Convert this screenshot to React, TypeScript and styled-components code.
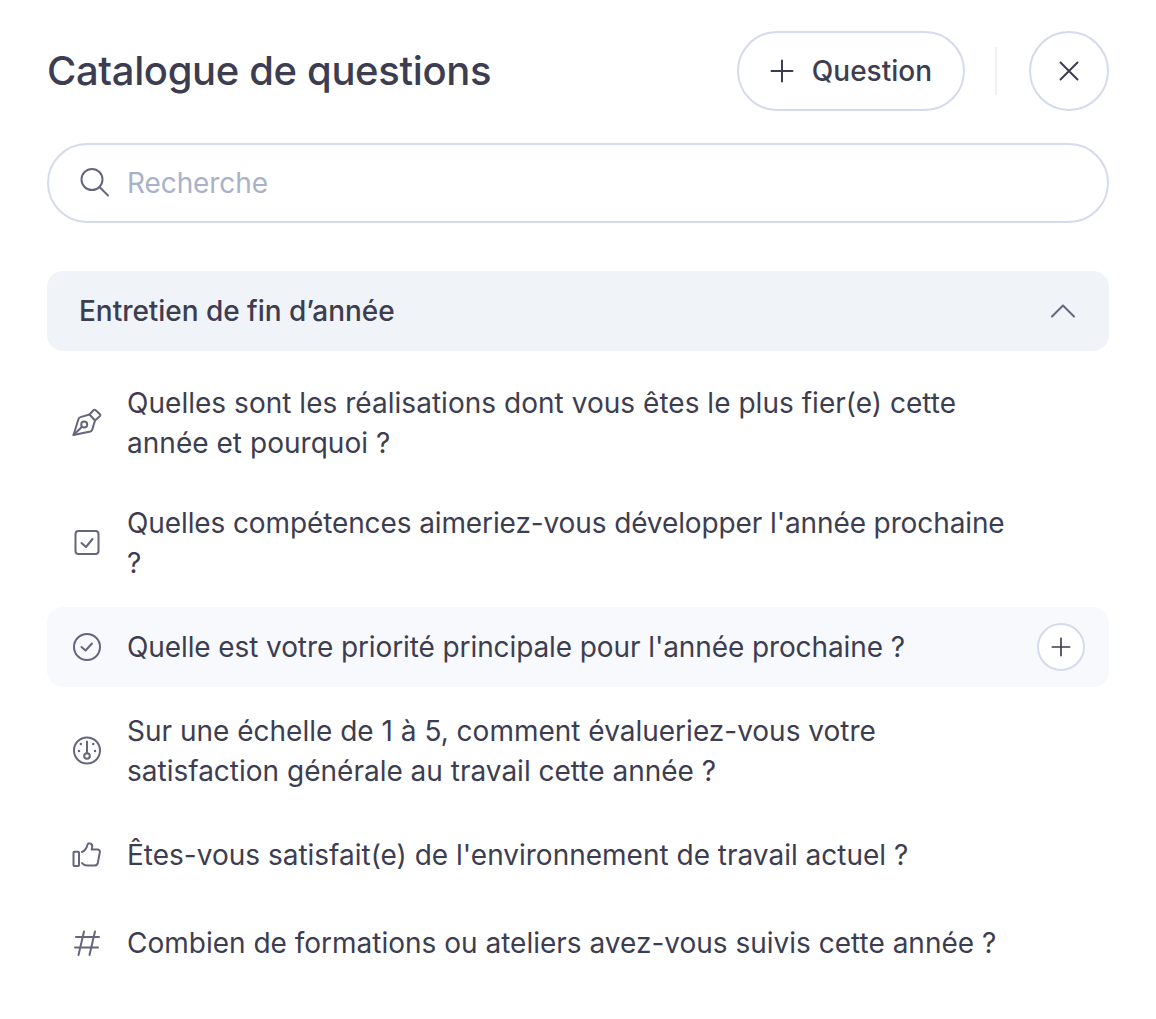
import React from 'react';
import styled, { createGlobalStyle } from 'styled-components';

const INK = '#3d3d51';
const ICON = '#65657f';
const LINE = '#d5daec';

const GlobalStyle = createGlobalStyle`
    html, body {
        margin: 0;
        padding: 0;
        background: #ffffff;
    }
    * {
        box-sizing: border-box;
    }
`;

const Panel = styled.div`
    display: flex;
    flex-direction: column;
    width: 1156px;
    height: 1019px;
    padding: 31px 47px 0;
    font-family: Inter, 'Liberation Sans', sans-serif;
    color: ${INK};
`;

const Header = styled.header`
    display: flex;
    align-items: center;
    height: 80px;
`;

const Title = styled.h1`
    flex: 1;
    margin: 0;
    font-size: 40px;
    line-height: 48px;
    font-weight: 500;
    letter-spacing: -0.36px;
    color: ${INK};
`;

const PillButton = styled.button`
    display: flex;
    align-items: center;
    gap: 18px;
    height: 80px;
    padding: 0 31px 0 31px;
    border: 2px solid ${LINE};
    border-radius: 40px;
    background: #ffffff;
    font-family: inherit;
    font-size: 28px;
    font-weight: 500;
    color: ${INK};
`;

const Divider = styled.div`
    width: 2px;
    height: 48px;
    margin: 0 32px 0 30px;
    background: #f0f1f5;
`;

const RoundButton = styled.button<{ $size: number; $hidden?: boolean }>`
    display: flex;
    align-items: center;
    justify-content: center;
    flex: none;
    width: ${(props) => props.$size}px;
    height: ${(props) => props.$size}px;
    padding: 0;
    border: 2px solid ${LINE};
    border-radius: 50%;
    background: #ffffff;
    visibility: ${(props) => (props.$hidden ? 'hidden' : 'visible')};
`;

const Search = styled.div`
    display: flex;
    align-items: center;
    gap: 16px;
    height: 80px;
    margin-top: 32px;
    padding: 0 30px;
    border: 2px solid ${LINE};
    border-radius: 40px;
    font-size: 28px;
    line-height: 40px;
    letter-spacing: -0.1px;
    color: #a9b2c9;
`;

const SectionHeader = styled.div`
    display: flex;
    align-items: center;
    justify-content: space-between;
    height: 80px;
    margin-top: 48px;
    padding: 0 30px 0 32px;
    border-radius: 16px;
    background: #f0f3f8;
    font-size: 28px;
    font-weight: 500;
    letter-spacing: -0.04px;
    color: ${INK};
`;

const List = styled.div`
    display: flex;
    flex-direction: column;
    gap: 8px;
    margin-top: 16px;
`;

const Row = styled.div<{ $active?: boolean }>`
    display: flex;
    align-items: center;
    gap: 24px;
    min-height: 80px;
    padding: 16px 24px;
    border-radius: 16px;
    background: ${(props) => (props.$active ? '#f8f9fc' : 'transparent')};
`;

const RowText = styled.div<{ $tracking?: number }>`
    flex: 1;
    font-size: 28px;
    line-height: 40px;
    letter-spacing: ${(props) => props.$tracking || 0}px;
    color: ${INK};
`;

const Glyph = styled.svg.attrs({ fill: 'none', strokeLinecap: 'round', strokeLinejoin: 'round' })<{ $size?: number; $dark?: boolean }>`
    display: block;
    flex: none;
    width: ${(props) => props.$size || 32}px;
    height: ${(props) => props.$size || 32}px;
    stroke: ${(props) => (props.$dark ? INK : ICON)};
    stroke-width: 2;
`;

const PenIcon = () => (
    <Glyph viewBox="0 0 32 32">
        <path d="M2.500 28 7.500 12c.3-1 1-1.600 2-1.900L18.500 7.500l5.500 6-2.700 9c-.3 1-.9 1.700-1.900 2L2.500 28Z" />
        <path d="M18.500 7.500l4.200-4.500c.5-.5 1.200-.5 1.700 0l4.600 4.300c.5.5.5 1.200 0 1.700L24 13.500" />
        <circle cx="13.200" cy="17.600" r="3" />
        <path d="M2.500 28l8.500-8.300" />
    </Glyph>
);

const CheckSquareIcon = () => (
    <Glyph viewBox="0 0 32 32">
        <rect x="4.500" y="4" width="23" height="23" rx="3" />
        <path d="M10.500 16l4.500 4 6.500-8" />
    </Glyph>
);

const CheckCircleIcon = () => (
    <Glyph viewBox="0 0 32 32">
        <circle cx="16" cy="16" r="13" />
        <path d="M10.500 16l4 3.500 6.500-7" />
    </Glyph>
);

const GaugeIcon = () => (
    <Glyph viewBox="0 0 32 32">
        <circle cx="16" cy="15.500" r="13" />
        <circle cx="16" cy="21" r="2.800" />
        <path d="M16 18.200V6.500" />
        <path strokeWidth="2.500" d="M8 16h.01M9.800 9h.01M22.200 9h.01M24 16h.01" />
    </Glyph>
);

const ThumbIcon = () => (
    <Glyph viewBox="0 0 32 32">
        <rect x="2.500" y="12.700" width="5.500" height="14.300" rx="0.800" />
        <path d="M11 13c2.600-1.200 4.600-3.600 5.400-7 .3-1.200 1-1.900 2.200-1.700 1.600.2 2.600 1.500 2.600 3.100 0 1-.2 2-.6 3h6c1.600 0 2.600 1.400 2.200 3l-2 10.500c-.4 1.700-1.500 2.600-3.200 2.600h-7.600c-2.200 0-3.600-.8-5-2.400" />
    </Glyph>
);

const HashIcon = () => (
    <Glyph viewBox="0 0 32 32">
        <path d="M5 10h23M4 20.500h23M13 4.500 7.500 28M24 4.500 18.500 28" />
    </Glyph>
);

const SearchIcon = () => (
    <Glyph viewBox="0 0 32 32">
        <circle cx="13" cy="12.500" r="10.500" />
        <path d="M20.500 20 29 28.500" />
    </Glyph>
);

const PlusIcon = ({ size }: { size: number }) => (
    <Glyph viewBox="0 0 24 24" $size={size} $dark>
        <path d="M12 1.500v21M1.500 12h21" />
    </Glyph>
);

const CloseIcon = () => (
    <Glyph viewBox="0 0 20 20" $size={20} $dark>
        <path d="M1.500 1.500l17 17M18.500 1.500l-17 17" />
    </Glyph>
);

const CaretIcon = () => (
    <Glyph viewBox="0 0 32 32">
        <path d="M5 21.500 16 10.500l11 11" />
    </Glyph>
);

const questions = [
    { icon: <PenIcon />, tracking: 0.03, text: 'Quelles sont les réalisations dont vous êtes le plus fier(e) cette année et pourquoi ?' },
    { icon: <CheckSquareIcon />, tracking: -0.11, text: "Quelles compétences aimeriez-vous développer l'année prochaine ?" },
    { icon: <CheckCircleIcon />, tracking: -0.1, text: "Quelle est votre priorité principale pour l'année prochaine ?", active: true },
    { icon: <GaugeIcon />, text: 'Sur une échelle de 1 à 5, comment évalueriez-vous votre satisfaction générale au travail cette année ?' },
    { icon: <ThumbIcon />, text: "Êtes-vous satisfait(e) de l'environnement de travail actuel ?" },
    { icon: <HashIcon />, text: 'Combien de formations ou ateliers avez-vous suivis cette année ?' },
];

export default function App() {
    return (
        <Panel>
            <GlobalStyle />
            <Header>
                <Title>Catalogue de questions</Title>
                <PillButton>
                    <PlusIcon size={24} />
                    Question
                </PillButton>
                <Divider />
                <RoundButton $size={80}>
                    <CloseIcon />
                </RoundButton>
            </Header>
            <Search>
                <SearchIcon />
                Recherche
            </Search>
            <SectionHeader>
                Entretien de fin d’année
                <CaretIcon />
            </SectionHeader>
            <List>
                {questions.map((question) => (
                    <Row key={question.text} $active={question.active}>
                        {question.icon}
                        <RowText $tracking={question.tracking}>{question.text}</RowText>
                        <RoundButton $size={48} $hidden={!question.active}>
                            <PlusIcon size={20} />
                        </RoundButton>
                    </Row>
                ))}
            </List>
        </Panel>
    );
}
